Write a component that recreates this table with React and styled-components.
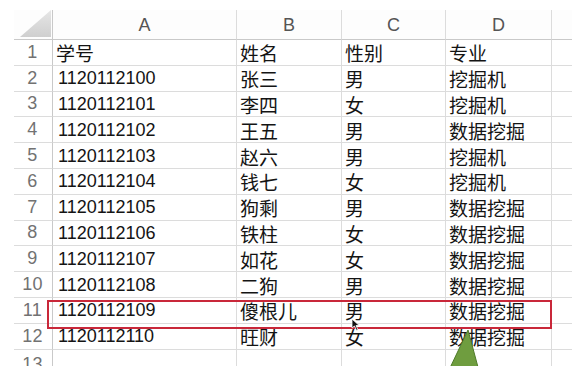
import React from 'react';
import styled, { createGlobalStyle } from 'styled-components';

const colors = {
  grid: '#dcdcdc',
  headerLine: '#c9c9c9',
  headerBg: '#fdfdfd',
  headerText: '#555',
  rowNum: '#727272',
  text: '#141414',
  red: '#c9283a',
  green: '#6f9d3f',
  greenDark: '#4f7a2a',
};

const GlobalStyle = createGlobalStyle`
  html, body {
    margin: 0;
    padding: 0;
    background: #fff;
    width: 572px;
    height: 366px;
    overflow: hidden;
    font-family: 'Liberation Sans', 'Noto Sans CJK SC', sans-serif;
  }
`;

const Page = styled.div`
  position: relative;
  width: 572px;
  height: 366px;
  overflow: hidden;
  padding: 10px 0 0 14px;
  box-sizing: border-box;
`;

const Sheet = styled.div`
  display: grid;
  grid-template-columns: 39px 184px 105px 104px 106px 60px;
  grid-template-rows: 30px repeat(12, 25.8px) 30px;
`;

const Corner = styled.div`
  position: relative;
  background: ${colors.headerBg};
  border-right: 1px solid ${colors.headerLine};
  border-bottom: 1px solid ${colors.headerLine};

  svg {
    position: absolute;
    right: 1px;
    bottom: 2px;
  }
`;

const ColHead = styled.div`
  display: flex;
  align-items: center;
  justify-content: center;
  padding-top: 2px;
  background: ${colors.headerBg};
  border-right: 1px solid ${colors.grid};
  border-bottom: 1px solid ${colors.headerLine};
  color: ${colors.headerText};
  font-size: 18px;
`;

const RowHead = styled.div`
  display: flex;
  align-items: center;
  justify-content: center;
  border-right: 1px solid ${colors.headerLine};
  border-bottom: 1px solid ${colors.grid};
  color: ${colors.rowNum};
  font-size: 18px;
  padding-right: 1px;
  letter-spacing: 0.3px;
`;

const Cell = styled.div`
  display: flex;
  align-items: center;
  padding-left: ${({ $cjk }) => ($cjk ? '3px' : '5px')};
  padding-top: 1px;
  border-right: 1px solid ${colors.grid};
  border-bottom: 1px solid ${colors.grid};
  color: ${colors.text};
  font-size: ${({ $cjk }) => ($cjk ? '19px' : '18px')};
  white-space: nowrap;
  overflow: hidden;
`;

const Highlight = styled.div`
  position: absolute;
  left: 47px;
  top: 300px;
  width: 505px;
  height: 29px;
  box-sizing: border-box;
  border: 2px solid ${colors.red};
  pointer-events: none;
`;

const Pointer = styled.svg`
  position: absolute;
  left: 351px;
  top: 318px;
`;

const GreenArrow = styled.svg`
  position: absolute;
  left: 440px;
  top: 329px;
`;

const columns = ['A', 'B', 'C', 'D', ''];

const rows = [
  ['学号', '姓名', '性别', '专业'],
  ['1120112100', '张三', '男', '挖掘机'],
  ['1120112101', '李四', '女', '挖掘机'],
  ['1120112102', '王五', '男', '数据挖掘'],
  ['1120112103', '赵六', '男', '挖掘机'],
  ['1120112104', '钱七', '女', '挖掘机'],
  ['1120112105', '狗剩', '男', '数据挖掘'],
  ['1120112106', '铁柱', '女', '数据挖掘'],
  ['1120112107', '如花', '女', '数据挖掘'],
  ['1120112108', '二狗', '男', '数据挖掘'],
  ['1120112109', '傻根儿', '男', '数据挖掘'],
  ['1120112110', '旺财', '女', '数据挖掘'],
  ['', '', '', ''],
];

const isNumber = (v) => /^[0-9]+$/.test(v);

export default function App() {
  return (
    <>
      <GlobalStyle />
      <Page>
        <Sheet>
          <Corner>
            <svg width="31" height="27" viewBox="0 0 31 27">
              <defs>
                <linearGradient id="cg" x1="0" y1="0" x2="0" y2="1">
                  <stop offset="0" stopColor="#e6e6e6" />
                  <stop offset="1" stopColor="#cfcfcf" />
                </linearGradient>
              </defs>
              <polygon points="31,0 31,27 0,27" fill="url(#cg)" />
            </svg>
          </Corner>
          {columns.map((c, i) => (
            <ColHead key={'h' + i}>{c}</ColHead>
          ))}

          {rows.map((row, r) => (
            <React.Fragment key={r}>
              <RowHead>{r + 1}</RowHead>
              {row.map((v, c) => (
                <Cell key={c} $cjk={v !== '' && !isNumber(v)}>
                  {v}
                </Cell>
              ))}
              <Cell />
            </React.Fragment>
          ))}
        </Sheet>

        <Highlight />

        <Pointer width="9" height="14" viewBox="0 0 9 14">
          <polygon points="1,1 1,10 3.5,8 5.5,12.5 7,11.8 5,7.5 8,7.3" fill="#111" stroke="#fff" strokeWidth="0.8" />
        </Pointer>

        <GreenArrow width="60" height="40" viewBox="0 0 60 40">
          <polygon points="28,1 9.5,40 38.5,40" fill={colors.green} stroke={colors.greenDark} strokeWidth="1" />
        </GreenArrow>
      </Page>
    </>
  );
}
